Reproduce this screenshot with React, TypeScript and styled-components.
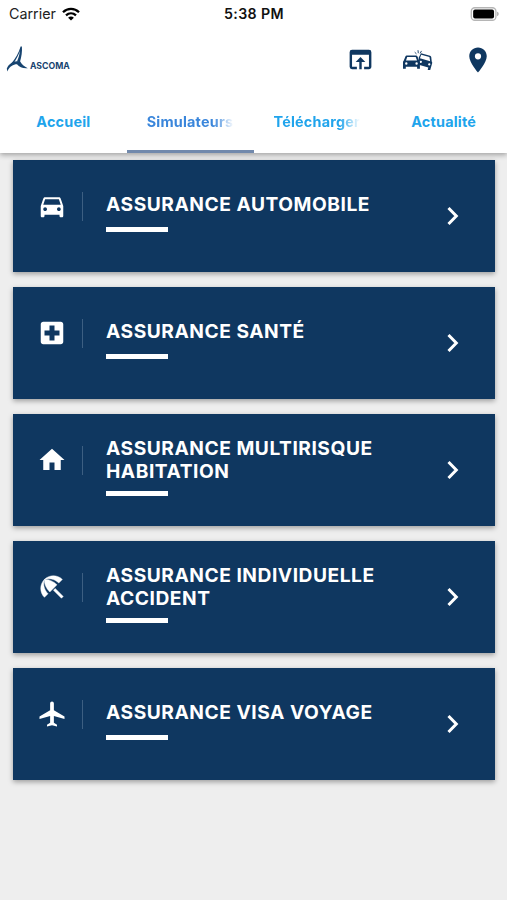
import React from 'react';
import styled, { createGlobalStyle } from 'styled-components';
import {
  MdBeachAccess,
  MdDirectionsCar,
  MdHome,
  MdLocalAirport,
  MdLocalHospital,
  MdOpenInBrowser,
  MdPlace,
} from 'react-icons/md';

const navy = '#0f3760';

const GlobalStyle = createGlobalStyle`
  * { box-sizing: border-box; }
  body { margin: 0; background: #eeeeee; font-family: Inter, "Liberation Sans", sans-serif; }
`;

const Screen = styled.div`
  width: 507px;
  height: 900px;
  background: #eeeeee;
  overflow: hidden;
`;

const Header = styled.header`
  position: relative;
  height: 153px;
  background: #fff;
  box-shadow: 0 2px 5px rgba(0, 0, 0, 0.32);
`;

const StatusBar = styled.div`
  display: grid;
  grid-template-columns: 1fr auto 1fr;
  align-items: center;
  height: 27px;
  padding: 0 7px 0 9px;
  color: #111;
`;

const Carrier = styled.div`
  display: flex;
  align-items: center;
  gap: 6px;
  font-size: 14.3px;
  letter-spacing: 0;
  color: #222;
`;

const Clock = styled.div`
  font-size: 14.2px;
  font-weight: 600;
  letter-spacing: 0.35px;
  margin-left: -1px;
`;

const BatterySlot = styled.div`
  display: flex;
  justify-content: flex-end;
`;

const Toolbar = styled.div`
  display: flex;
  align-items: center;
  justify-content: space-between;
  height: 65px;
  padding: 0 14.5px 0 6px;
`;

const Actions = styled.div`
  display: flex;
  align-items: center;
  gap: 28.4px;
  color: ${navy};

  svg { display: block; }
`;

const Brand = styled.div`
  display: flex;
  align-items: flex-end;
  height: 27px;
  color: #174470;
`;

const BrandName = styled.span`
  margin: 0 0 1px 2px;
  font-size: 8.7px;
  line-height: 11px;
  font-weight: 700;
`;

const Tabs = styled.nav`
  display: grid;
  grid-template-columns: repeat(4, 1fr);
  height: 61px;
`;

const Tab = styled.div<{ $active?: boolean }>`
  display: flex;
  align-items: center;
  min-width: 0;
  padding: 2px 20px 0;
  border-bottom: 3px solid ${(p) => (p.$active ? '#7189ac' : 'transparent')};
  color: ${(p) => (p.$active ? '#3a86db' : '#20a4ec')};
`;

const TabLabel = styled.span<{ $fade?: boolean }>`
  width: 100%;
  overflow: hidden;
  white-space: nowrap;
  text-align: ${(p) => (p.$fade ? 'left' : 'center')};
  font-size: 14.4px;
  line-height: 20px;
  font-weight: 700;
  letter-spacing: 0.2px;
  mask-image: ${(p) => (p.$fade ? 'linear-gradient(90deg, #000 76%, transparent 100%)' : 'none')};
`;

const List = styled.main`
  display: flex;
  flex-direction: column;
  gap: 15px;
  padding: 7px 12.5px 0 13px;
`;

const Card = styled.section`
  display: flex;
  height: 112px;
  background: ${navy};
  color: #fff;
  box-shadow: 0 2px 5px rgba(0, 0, 0, 0.34);
`;

const IconCell = styled.div`
  width: 70px;
  height: 29px;
  margin-top: 32px;
  padding-left: 24px;
  border-right: 1.5px solid #3d5f82;

  svg { display: block; margin-top: -1px; }
`;

const Copy = styled.div<{ $lines: number }>`
  flex: 1;
  padding: ${(p) => (p.$lines === 1 ? '33px' : '23px')} 0 0 23px;
`;

const Title = styled.h2<{ $lines: number }>`
  margin: 0 0 ${(p) => (p.$lines === 1 ? '11px' : '8px')};
  font-size: 19.2px;
  line-height: 23px;
  font-weight: 700;
  letter-spacing: 0.53px;
  white-space: pre-line;
`;

const Accent = styled.div`
  width: 62px;
  height: 5px;
  background: #fff;
`;

const ArrowCell = styled.div`
  display: flex;
  align-items: center;
  width: 60px;
  padding-left: 11px;

  svg { display: block; }
`;

const Chevron = () => (
  <svg width="14" height="20" viewBox="0 0 14 20" fill="none" stroke="#fff" strokeWidth="3">
    <path d="m2.5 2 7.8 8-7.8 8" />
  </svg>
);

const UmbrellaIcon = styled(MdBeachAccess)`
  path:not([fill='none']) {
    stroke: #fff;
    stroke-width: 0.35px;
  }
`;

const Wifi = () => (
  <svg width="18" height="14" viewBox="0 0 18 14" fill="none" stroke="#000" strokeWidth="2.3">
    <path d="M1 5.2C5.5.8 12.5.8 17 5.2" />
    <path d="M4 8.3c2.9-2.7 7.1-2.7 10 0" />
    <path d="M9 13.6 6.1 10.7c1.7-1.5 4.1-1.5 5.8 0Z" fill="#000" stroke="none" />
  </svg>
);

const Battery = () => (
  <svg width="30" height="14" viewBox="0 0 31 15">
    <rect x="0.8" y="0.8" width="26.4" height="13.4" rx="3.8" fill="#fff" stroke="#b5b5b5" strokeWidth="1.4" />
    <rect x="2.8" y="2.8" width="22.4" height="9.4" rx="2" fill="#000" />
    <path d="M28.5 5.2c2.2.7 2.2 3.9 0 4.6Z" fill="#aaa" />
  </svg>
);

const LogoMark = () => (
  <svg width="22" height="27" viewBox="0 0 22 27" fill="currentColor">
    <path d="M14.6.5h1.3c.4 5.3-.4 10.3-1.9 15.3l-3-.3c1.6-3.6 2.5-6.9 2.9-10.4C12.5 9 10.6 12.8 7.6 17.6L4.9 18C9.6 12.6 12.9 6.6 14.6.5Z" />
    <path d="M1.3 25.4.8 22.6C2.7 18.2 6 15.7 10.8 15.3l3.1-.2c1.7 3.1 4.2 5.6 7.9 7.2-4.8.4-8.4-.9-10.8-4-3.9 0-7.1 2-9.7 7.1Z" />
  </svg>
);

const Crash = () => (
  <svg width="31" height="20" viewBox="0 0 31 20" fill="currentColor">
    <path
      fillRule="evenodd"
      d="M3.8 5.5h9.3c.7 0 1.1.3 1.4.9l1.6 4.2c.5.4.8 1 .8 1.7v6.5h-2.8v-2H2.8v2H0v-6.5c0-.7.3-1.3.8-1.7l1.6-4.2c.2-.6.7-.9 1.4-.9ZM4.2 7 3 10.4h11L12.7 7ZM3.3 12.3a1.2 1.2 0 1 0 0 2.4 1.2 1.2 0 0 0 0-2.4Zm10.3 0a1.2 1.2 0 1 0 0 2.4 1.2 1.2 0 0 0 0-2.4Z"
    />
    <g transform="translate(18.2 3.2) rotate(16)">
      <path
        fillRule="evenodd"
        d="M-.2 0h9.4c.7 0 1.2.3 1.5.9L12.4 5c.6.4.9 1 .9 1.6v7.6h-2.5v-2.4H.8L.2 8.2-1.2 4.8ZM.4 1.5.2 5.2h10.6L9 1.5ZM2 7.4a1.1 1.1 0 1 0 0 2.2 1.1 1.1 0 0 0 0-2.2Zm8.8 0a1.1 1.1 0 1 0 0 2.2 1.1 1.1 0 0 0 0-2.2Z"
      />
    </g>
    <path d="m11.7 2.2 1.8 1.7M15 .2l.3 3M18.5.9l-1.4 2.5" stroke="currentColor" strokeWidth="0.9" fill="none" />
  </svg>
);

const items = [
  { title: 'ASSURANCE AUTOMOBILE', lines: 1, Icon: MdDirectionsCar },
  { title: 'ASSURANCE SANTÉ', lines: 1, Icon: MdLocalHospital },
  { title: 'ASSURANCE MULTIRISQUE\nHABITATION', lines: 2, Icon: MdHome },
  { title: 'ASSURANCE INDIVIDUELLE\nACCIDENT', lines: 2, Icon: UmbrellaIcon },
  { title: 'ASSURANCE VISA VOYAGE', lines: 1, Icon: MdLocalAirport },
];

export default function App() {
  return (
    <Screen>
      <GlobalStyle />
      <Header>
        <StatusBar>
          <Carrier>Carrier <Wifi /></Carrier>
          <Clock>5:38 PM</Clock>
          <BatterySlot><Battery /></BatterySlot>
        </StatusBar>
        <Toolbar>
          <Brand>
            <LogoMark />
            <BrandName>ASCOMA</BrandName>
          </Brand>
          <Actions>
            <MdOpenInBrowser size={29} />
            <Crash />
            <MdPlace size={30} />
          </Actions>
        </Toolbar>
        <Tabs>
          <Tab><TabLabel>Accueil</TabLabel></Tab>
          <Tab $active><TabLabel $fade>Simulateurs</TabLabel></Tab>
          <Tab><TabLabel $fade>Télécharger</TabLabel></Tab>
          <Tab><TabLabel>Actualité</TabLabel></Tab>
        </Tabs>
      </Header>
      <List>
        {items.map(({ title, lines, Icon }) => (
          <Card key={title}>
            <IconCell><Icon size={30} /></IconCell>
            <Copy $lines={lines}>
              <Title $lines={lines}>{title}</Title>
              <Accent />
            </Copy>
            <ArrowCell><Chevron /></ArrowCell>
          </Card>
        ))}
      </List>
    </Screen>
  );
}
